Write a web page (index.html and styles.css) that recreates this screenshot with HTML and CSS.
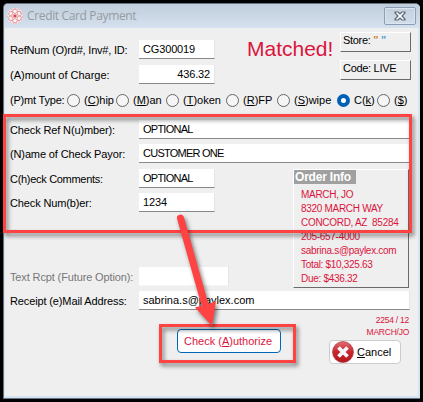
FILE: index.html
```html
<!DOCTYPE html>
<html lang="en">
<head>
<meta charset="utf-8">
<title>Credit Card Payment</title>
<link rel="stylesheet" href="styles.css">
</head>
<body>
<main class="window">
  <header class="titlebar">
    <svg class="logo" viewBox="0 0 16 16"><circle cx="8" cy="8" r="8" fill="#fdf6f6"/><g fill="none" stroke="#e08c93" stroke-width=".8"><circle cx="8" cy="8" r="7.3" stroke-dasharray="2 1"/><ellipse cx="8" cy="4.5" rx="2.6" ry="3.3"/><ellipse cx="8" cy="4.5" rx="2.6" ry="3.3" transform="rotate(60 8 8)"/><ellipse cx="8" cy="4.5" rx="2.6" ry="3.3" transform="rotate(120 8 8)"/><ellipse cx="8" cy="4.5" rx="2.6" ry="3.3" transform="rotate(180 8 8)"/><ellipse cx="8" cy="4.5" rx="2.6" ry="3.3" transform="rotate(240 8 8)"/><ellipse cx="8" cy="4.5" rx="2.6" ry="3.3" transform="rotate(300 8 8)"/></g><circle cx="8" cy="8" r=".9" fill="#d51f35"/></svg>
    <h1 class="title">Credit Card Payment</h1>
    <span class="close"><svg width="12" height="10" viewBox="0 0 12 10"><path d="M1 1H4L6 3L8 1H11V2L8 5L11 8V9H8L6 7L4 9H1V8L4 5L1 2Z" fill="#fff" stroke="#5b6675" stroke-width="1.2"/></svg></span>
  </header>
  <div class="content">
    <section class="top">
      <div class="fields">
        <div class="row"><span class="label tighter">RefNum (O)rd#, Inv#, ID:</span><span class="input short">CG300019</span></div>
        <div class="row"><span class="label loose">(A)mount of Charge:</span><span class="input short num">436.32</span></div>
      </div>
      <strong class="matched">Matched!</strong>
      <div class="tags"><span class="tag">Store: <i class="q1">"</i> <i class="q2">"</i></span><span class="tag">Code: LIVE</span></div>
    </section>
    <section class="types">
      <span class="type-label">(P)mt Type:</span>
      <i class="radio"></i><span class="opt o1">(<u>C</u>)hip</span>
      <i class="radio"></i><span class="opt o2">(<u>M</u>)an</span>
      <i class="radio"></i><span class="opt o3">(<u>T</u>)oken</span>
      <i class="radio"></i><span class="opt o4">(<u>R</u>)FP</span>
      <i class="radio"></i><span class="opt o5">(<u>S</u>)wipe</span>
      <i class="radio on"></i><span class="opt o6">C(<u>k</u>)</span>
      <i class="radio"></i><span class="opt">(<u>$</u>)</span>
    </section>
    <section class="fields check">
      <div class="row"><span class="label">Check Ref N(u)mber):</span><span class="input wide caps">OPTIONAL</span></div>
      <div class="row"><span class="label">(N)ame of Check Payor:</span><span class="input wide caps">CUSTOMER ONE</span></div>
    </section>
    <section class="middle">
      <div class="fields">
        <div class="row"><span class="label tight">C(h)eck Comments:</span><span class="input short caps">OPTIONAL</span></div>
        <div class="row"><span class="label">Check Num(b)er:</span><span class="input short">1234</span></div>
        <div class="row future"><span class="label">Text Rcpt (Future Option):</span><span class="input rcpt"></span></div>
      </div>
      <aside class="order">
        <h2 class="order-title">Order Info</h2>
        <div class="order-lines">
          <p>MARCH, JO</p><p>8320 MARCH WAY</p><p>CONCORD, AZ&nbsp; 85284</p><p>205-657-4000</p><p>sabrina.s@paylex.com</p><p>Total: $10,325.63</p><p>Due: $436.32</p>
        </div>
      </aside>
    </section>
    <div class="row email"><span class="label">Receipt (e)Mail Address:</span><span class="input wide mail">sabrina.s@paylex.com</span></div>
    <footer class="footer">
      <span class="authorize">Check (<u>A</u>)uthorize</span>
      <div class="right">
        <span class="ref">2254 / 12</span><span class="ref">MARCH/JO</span>
        <span class="cancel"><svg width="22" height="22" viewBox="0 0 22 22"><defs><linearGradient id="red" x2="0" y2="1"><stop stop-color="#df6d70"/><stop offset=".5" stop-color="#c9242b"/><stop offset="1" stop-color="#b5151c"/></linearGradient></defs><circle cx="11" cy="11" r="10.5" fill="url(#red)" stroke="#a9454a" stroke-width=".7"/><path d="M6.5 6.5L15.5 15.5M15.5 6.5L6.5 15.5" stroke="#f4f8fc" stroke-width="3.8"/></svg><span class="cancel-text"><u>C</u>ancel</span></span>
      </div>
    </footer>
  </div>
</main>
<svg class="marks" width="423" height="402" viewBox="0 0 423 402">
  <g fill="none" stroke="#ff4343" stroke-width="3"><rect x="4.5" y="115.5" width="406" height="116" class="shade"/><rect x="160.5" y="325.5" width="134" height="36" class="shade"/></g>
  <g class="shade"><path d="M180.5 218L205 305" stroke="#ff4343" stroke-width="7" stroke-linecap="round"/><path d="M195 307.5L216 301.5L212 326Z" fill="#ff4343"/></g>
</svg>
</body>
</html>
```
FILE: styles.css
```css
* { box-sizing: border-box; }
body { margin: 0; width: 423px; height: 402px; overflow: hidden; background: #000; padding: 3px; font: 11px/18px "Liberation Sans", Arial, sans-serif; color: #000; }
h1, h2, p { margin: 0; font-weight: normal; }
i { font-style: normal; }
u { text-underline-offset: 1px; text-decoration-thickness: 1px; }
.window { width: 417px; height: 396px; border: 1px solid #66727e; border-width: 1px 0 1px 1px; border-radius: 5px 5px 0 0; background: #efefef; box-shadow: inset 1px 0 #d5e4f3, inset -2px -2px #d5e4f3; overflow: hidden; }
.titlebar { height: 24px; display: flex; align-items: center; padding: 0 4px 0 3px; background: linear-gradient(#c0cddb, #d5e1ee); }
.logo { width: 16px; height: 16px; }
.title { font: 12px/20px "Open Sans", sans-serif; color: #959ba1; margin-left: 4px; letter-spacing: -.35px; }
.close { margin-left: auto; width: 32px; height: 18px; border: 1px solid #8b9db2; border-radius: 2px; box-shadow: inset 0 0 0 1px #dbe6f1; display: flex; align-items: center; justify-content: center; }
.content { padding: 4px 0 0 6px; }
.top { display: flex; height: 59px; }
.fields { display: flex; flex-direction: column; gap: 6px; }
.top .fields { padding-top: 8px; }
.row { display: flex; height: 19px; align-items: center; }
.label { width: 129px; white-space: nowrap; letter-spacing: -.13px; }
.loose { letter-spacing: 0; }
.tight { letter-spacing: -.3px; }
.tighter { letter-spacing: -.2px; }
.input { display: block; height: 19px; background: #fff; border-bottom: 1px solid #888; border-right: 1px solid #e5e5e5; padding-left: 4px; line-height: 19px; white-space: nowrap; letter-spacing: -.15px; }
.caps { letter-spacing: -.75px; }
.mail { letter-spacing: 0; }
.short { width: 76px; }
.wide { width: 271px; }
.num { text-align: right; padding-right: 4px; }
.matched { font: 21px/24px "Liberation Sans", sans-serif; color: #dc143c; margin: 5px 0 0 32px; width: 93px; }
.tags { display: flex; flex-direction: column; gap: 8px; }
.tag { width: 71px; height: 20px; border: 1px solid #fff; border-right-color: #6b6b6b; border-bottom-color: #6b6b6b; padding-left: 2px; line-height: 14px; white-space: nowrap; letter-spacing: -.3px; }
.q1, .q2 { font-weight: bold; }
.q1 { color: #d08a45; }
.q2 { color: #5b9bd0; }
.types { display: flex; align-items: center; height: 18px; white-space: nowrap; }
.type-label { width: 57px; letter-spacing: -.2px; }
.radio { width: 13px; height: 13px; border: 1px solid #666; border-radius: 50%; background: #f5f5f5; margin-right: 4px; flex: none; }
.radio.on { border: 4px solid #0060b8; background: #fff; }
.opt { flex: none; }
.o1 { width: 32px; }
.o2 { width: 33px; }
.o3 { width: 43px; }
.o4 { width: 34px; }
.o5 { width: 43px; }
.o6 { width: 23px; }
.check { margin-top: 11px; gap: 5px; }
.middle { display: flex; height: 122px; margin-top: 6px; }
.middle .fields { gap: 5px; width: 283px; }
.future { margin-top: 50px; color: #777; }
.rcpt { width: 90px; border-bottom-color: #f5f5f5; }
.order { width: 116px; height: 119px; border: 1px solid #fff; border-right-color: #6b6b6b; border-bottom-color: #6b6b6b; }
.order-title { width: 62px; height: 14px; background: #a0a0a0; color: #fff; font: bold 12px/14px "Liberation Sans", sans-serif; padding-left: 1px; white-space: nowrap; letter-spacing: -.2px; }
.order-lines { padding: 4px 0 0 7px; color: #dc143c; font-size: 10px; line-height: 14px; white-space: nowrap; letter-spacing: -.3px; }
.email { height: 19px; }
.footer { display: flex; height: 74px; }
.authorize { margin: 19px 0 0 167px; width: 104px; height: 24px; border: 1px solid #0067b8; border-radius: 4px; background: #fff; color: #dc143c; padding-left: 6px; line-height: 22px; white-space: nowrap; }
.right { margin-left: 48px; width: 80px; display: flex; flex-direction: column; align-items: flex-end; padding-top: 4px; }
.ref { font-size: 8.5px; line-height: 12px; color: #dc143c; letter-spacing: -.25px; }
.cancel { align-self: flex-start; width: 72px; height: 24px; margin-top: 2px; border: 1px solid #ccc; border-radius: 4px; background: #fff; display: flex; align-items: center; padding-left: 2px; }
.cancel-text { margin-left: 3px; }
.marks { position: absolute; left: 0; top: 0; }
.shade { filter: drop-shadow(2px 3px 2px rgba(0, 0, 0, .5)); }
```
